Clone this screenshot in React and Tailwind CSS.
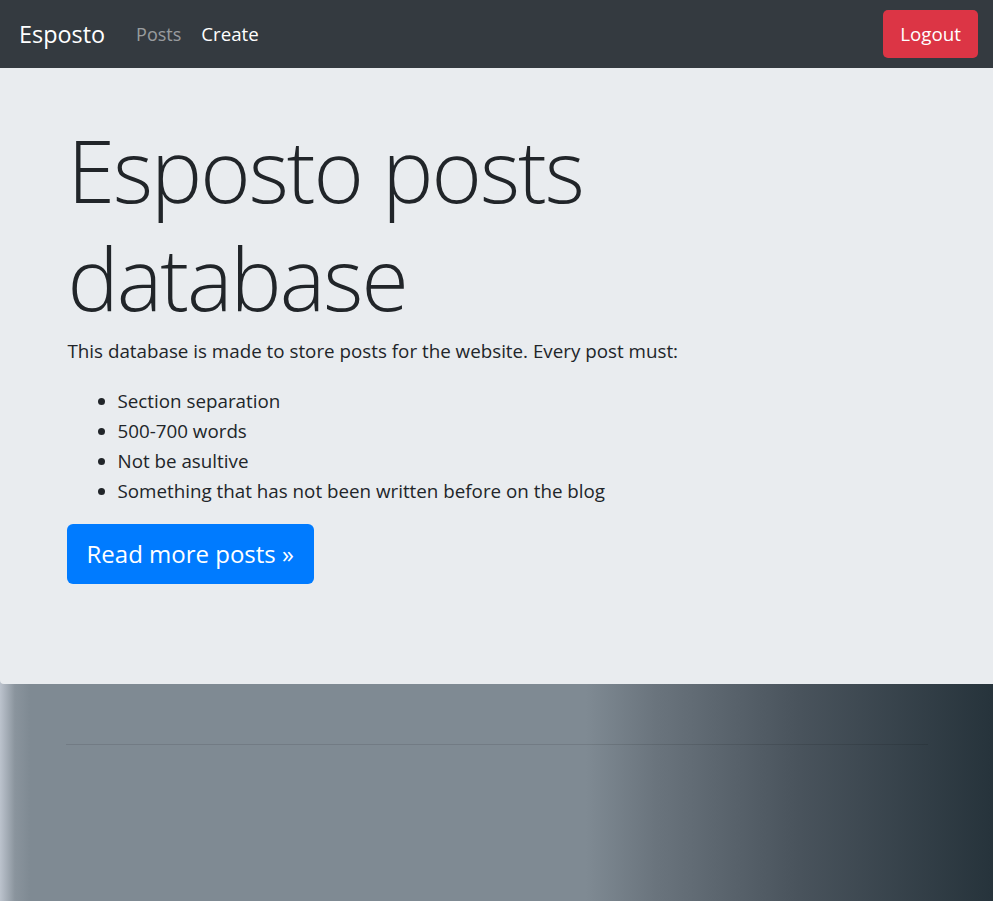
export default function App() {
  return (
    <div className="min-h-screen bg-[linear-gradient(to_right,#bcc3cd_0%,#8a949d_1.5%,#7f8a93_3%,#7f8a93_59%,#6a747d_66%,#4a545d_80%,#26333b_100%)] font-['Open_Sans',sans-serif] text-[18.8px] leading-[30px] text-[#212529]">
      <nav className="flex h-[68px] items-center justify-between bg-[#343a40] pl-[19px] pr-[15px]">
        <div className="flex items-center">
          <span className="text-[23.4px] leading-[37px] text-white">Esposto</span>
          <span className="ml-[31px] text-[18px] text-white/50">Posts</span>
          <span className="ml-[20px] text-[18.7px] text-white">Create</span>
        </div>
        <button className="h-[48px] rounded-[5px] bg-[#dc3545] px-[17px] text-[18.8px] text-white">Logout</button>
      </nav>
      <div className="rounded-bl-[4px] bg-[#e9ecef] pb-[80px] pt-[48px]">
        <div className="mx-auto w-[900px] px-[21px]">
          <h1 className="text-[86px] font-light leading-[108px] tracking-[-2px]">Esposto posts database</h1>
          <p className="mb-[20px] mt-[4px]">This database is made to store posts for the website. Every post must:</p>
          <ul className="mb-[18px] list-disc pl-[50px]">
            <li>Section separation</li>
            <li>500-700 words</li>
            <li>Not be asultive</li>
            <li>Something that has not been written before on the blog</li>
          </ul>
          <p className="mb-[20px]">
            <a className="-ml-[1px] inline-block h-[60px] rounded-[6px] bg-[#007bff] px-[20px] text-[24px] leading-[60px] text-white">Read more posts »</a>
          </p>
        </div>
      </div>
      <div className="mx-auto w-[900px] px-[19px] pt-[60px]">
        <hr className="border-t border-black/10" />
      </div>
    </div>
  );
}
